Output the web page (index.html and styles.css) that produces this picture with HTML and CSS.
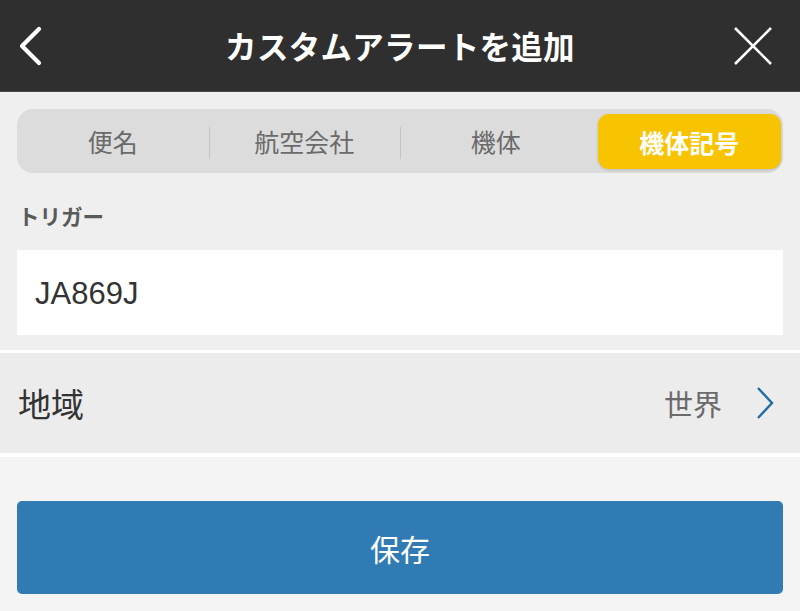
FILE: index.html
```html
<!DOCTYPE html>
<html lang="ja">
<head>
<meta charset="utf-8">
<title>カスタムアラートを追加</title>
<link rel="stylesheet" href="styles.css">
</head>
<body>
<div class="screen">
  <header class="topbar">
    <span class="icon back">
      <svg width="24" height="40" viewBox="0 0 24 40"><path d="M21 3 L4 20 L21 37" fill="none" stroke="#fff" stroke-width="4.2" stroke-linecap="round" stroke-linejoin="round"/></svg>
    </span>
    <h1 class="title">カスタムアラートを追加</h1>
    <span class="icon close">
      <svg width="38" height="38" viewBox="0 0 38 38"><path d="M1 1 L37 37 M37 1 L1 37" fill="none" stroke="#fff" stroke-width="2.6"/></svg>
    </span>
  </header>

  <section class="form">
    <div class="segments">
      <div class="seg">便名</div>
      <div class="seg divided">航空会社</div>
      <div class="seg divided">機体</div>
      <div class="seg active"><span class="pill">機体記号</span></div>
    </div>
    <div class="label">トリガー</div>
    <div class="input">JA869J</div>
  </section>

  <div class="row">
    <span class="row-label">地域</span>
    <span class="row-value">世界</span>
    <svg class="chev" width="18" height="32" viewBox="0 0 18 32"><path d="M2 1 L16 16 L2 31" fill="none" stroke="#1f6da6" stroke-width="2.4"/></svg>
  </div>

  <div class="actions">
    <button class="save">保存</button>
  </div>
</div>
</body>
</html>
```

FILE: styles.css
```css
* { box-sizing: border-box; }
html, body { margin: 0; padding: 0; }
body {
  width: 800px;
  height: 611px;
  overflow: hidden;
  background: #f4f4f4;
  font-family: "Noto Sans CJK JP", "Noto Sans", sans-serif;
}
.screen { display: flex; flex-direction: column; }

.topbar {
  height: 92px;
  background: #2f2f2f;
  border-bottom: 1px solid #4a4a4a;
  display: flex;
  align-items: center;
  justify-content: space-between;
  padding: 0 28px 0 18px;
}
.icon { display: flex; align-items: center; }
.back { width: 48px; margin-top: 1px; }
.close { width: 38px; margin-top: 1px; }
.title {
  margin: 0;
  color: #fff;
  font-size: 31.5px;
  font-weight: 700;
  letter-spacing: 0.3px;
  line-height: 1;
}

.form {
  background: #efefef;
  padding: 17px 17px 15px;
  border-bottom: 3px solid #ffffff;
}
.segments {
  height: 64px;
  background: #dcdcdc;
  border-radius: 16px;
  display: flex;
  align-items: stretch;
}
.seg {
  width: 25%;
  flex: none;
  display: flex;
  align-items: center;
  justify-content: center;
  font-size: 25px;
  color: #6a6a6a;
  position: relative;
}
.seg.divided::before {
  content: "";
  position: absolute;
  left: 0;
  top: 18px;
  bottom: 14px;
  width: 1px;
  background: #c4c4c4;
}
.seg.active { padding: 5px 2px 4px 6px; align-items: stretch; }
.pill {
  flex: 1;
  display: flex;
  align-items: center;
  justify-content: center;
  background: #f8c300;
  border-radius: 11px;
  color: #fff;
  font-weight: 700;
  box-shadow: 0 1px 3px rgba(0,0,0,0.15);
}
.label {
  margin-top: 28px;
  font-size: 21.5px;
  line-height: 29px;
  font-weight: 700;
  color: #5a5a5a;
  padding-left: 1px;
}
.input {
  margin-top: 20px;
  height: 85px;
  background: #fff;
  display: flex;
  align-items: center;
  padding-left: 18px;
  font-family: "Liberation Sans", "Noto Sans CJK JP", sans-serif;
  font-size: 31px;
  color: #333;
  padding-top: 2px;
}

.row {
  height: 104px;
  background: #ececec;
  border-bottom: 4px solid #ffffff;
  display: flex;
  align-items: center;
  padding: 0 26px 0 18px;
}
.row-label { font-size: 33px; color: #333; flex: 1; }
.row-value { font-size: 29px; color: #6a6a6a; margin-right: 34px; }
.chev { display: block; }

.actions { padding: 44px 17px 0; }
.save {
  width: 100%;
  height: 93px;
  border: none;
  border-radius: 5px;
  background: #317bb5;
  color: #fff;
  font-family: "Noto Sans CJK JP", sans-serif;
  font-size: 30px;
  padding: 0;
}
```
